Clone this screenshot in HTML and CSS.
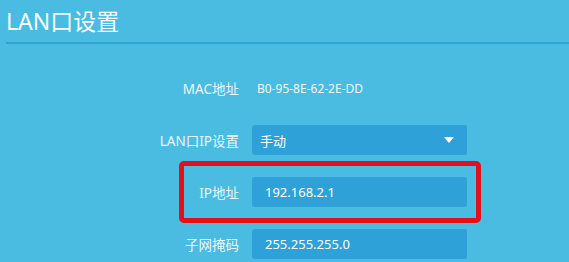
FILE: index.html
```html
<!DOCTYPE html>
<html lang="zh-CN">
<head>
<meta charset="utf-8">
<title>LAN口设置</title>
<link rel="stylesheet" href="styles.css">
</head>
<body>
<div class="page">
  <div class="header"><h1 class="title">LAN口设置</h1></div>
  <div class="form">
    <div class="row">
      <div class="label">MAC地址</div>
      <div class="value">B0-95-8E-62-2E-DD</div>
    </div>
    <div class="row">
      <div class="label">LAN口IP设置</div>
      <div class="field select"><span>手动</span><span class="arrow"></span></div>
    </div>
    <div class="row hl">
      <div class="label">IP地址</div>
      <div class="field input">192.168.2.1</div>
    </div>
    <div class="row">
      <div class="label">子网掩码</div>
      <div class="field input">255.255.255.0</div>
    </div>
  </div>
</div>
</body>
</html>
```
FILE: styles.css
```css
html, body {
  margin: 0;
  padding: 0;
  background: #4abbe1;
  width: 569px;
  height: 262px;
  overflow: hidden;
}
.page {
  font-family: "Noto Sans", "Noto Sans CJK SC", sans-serif;
  color: #fff;
}
.header {
  margin-left: 6px;
  height: 42px;
  border-bottom: 2px solid #30a4d7;
  display: flex;
  align-items: center;
}
.title {
  margin: 0;
  font-weight: 400;
  font-size: 23px;
  line-height: 1;
  color: #f4fbfe;
}
.form {
  margin-top: 29px;
  display: flex;
  flex-direction: column;
  gap: 22px;
}
.row {
  position: relative;
  display: grid;
  grid-template-columns: 239px 215px;
  column-gap: 13px;
  align-items: center;
  height: 30px;
}
.label {
  text-align: right;
  font-size: 13.5px;
  color: #eaf7fc;
}
.value {
  font-size: 12px;
  padding-left: 5px;
  color: #eef9fd;
}
.field {
  height: 30px;
  box-sizing: border-box;
  background: #2ea2d8;
  border-radius: 3px;
  display: flex;
  align-items: center;
  font-size: 13px;
  color: #fff;
}
.input {
  padding-left: 13px;
}
.select {
  padding-left: 8px;
  padding-right: 13px;
  justify-content: space-between;
}
.arrow {
  width: 0;
  height: 0;
  border-left: 5px solid transparent;
  border-right: 5px solid transparent;
  border-top: 6px solid #fff;
}
.hl::after {
  content: "";
  position: absolute;
  left: 179px;
  top: -16px;
  width: 302px;
  height: 62px;
  box-sizing: border-box;
  border: 5px solid #e3101c;
  border-radius: 5px;
}
```
